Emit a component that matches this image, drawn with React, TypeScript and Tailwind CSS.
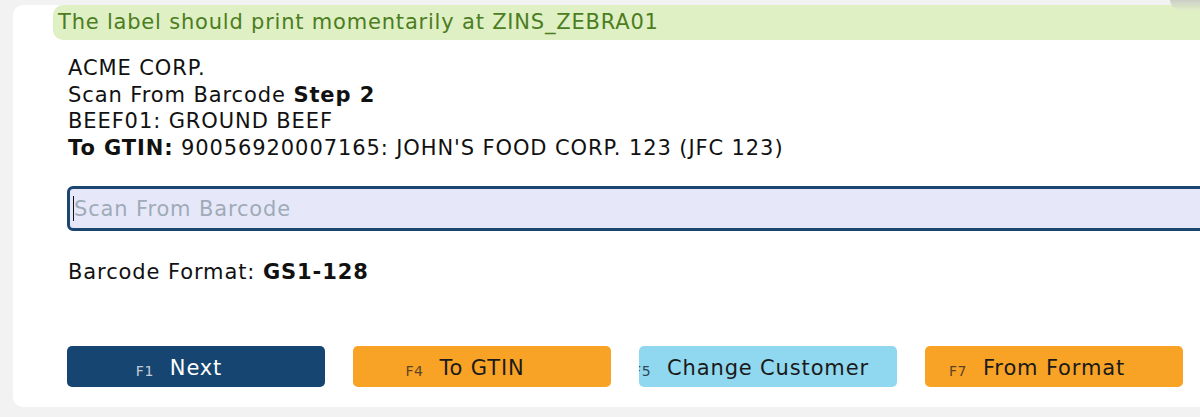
import React from 'react';

interface FKeyButtonProps {
  fkey: string;
  label: string;
  variant: 'navy' | 'orange' | 'sky';
}

function FKeyButton({ fkey, label, variant }: FKeyButtonProps) {
  const bg =
    variant === 'navy'
      ? 'bg-[#154570] text-white'
      : variant === 'orange'
        ? 'bg-[#f9a326] text-[#1a1a1a]'
        : 'bg-[#90d8f0] text-[#1a1a1a]';
  const keyColor =
    variant === 'navy' ? 'text-[#c3ccd6]' : variant === 'orange' ? 'text-[#5b4527]' : 'text-[#2f4a58]';
  return (
    <button className={`w-[258px] h-[41px] rounded-[5px] overflow-hidden flex items-center justify-center ${bg}`}>
      <span className="relative top-[2px] text-[21px] tracking-[0.85px] leading-none">
        <span className={`absolute right-full mr-[16px] bottom-[1px] text-[14px] tracking-[0.5px] leading-none ${keyColor}`}>
          {fkey}
        </span>
        {label}
      </span>
    </button>
  );
}

export default function App() {
  return (
    <div
      className="h-[417px] bg-[#f2f2f2] pl-[13px] pt-[5px] overflow-hidden relative"
      style={{ fontFamily: '"DejaVu Sans", Verdana, sans-serif' }}
    >
      <div className="absolute right-0 top-0 w-[30px] h-[10px] rounded-bl-full bg-gradient-to-b from-[#b8bfae] to-[#e2ecd0] opacity-70" />
      <div className="w-[1210px] h-[402px] bg-white rounded-l-[10px] flex flex-col">
        <div className="ml-[40px] h-[35px] bg-[#dff0c4] rounded-l-[10px] pl-[5px] pt-[1px] flex items-center text-[21px] tracking-[0.8px] text-[#4c7d1f]">
          The label should print momentarily at ZINS_ZEBRA01
        </div>
        <div className="pl-[55px] pt-[15px] text-[21px] tracking-[0.9px] leading-[26.7px] text-[#111]">
          <div>ACME CORP.</div>
          <div>
            Scan From Barcode <b>Step 2</b>
          </div>
          <div>BEEF01: GROUND BEEF</div>
          <div>
            <b>To GTIN:</b> 90056920007165: JOHN'S FOOD CORP. 123 (JFC 123)
          </div>
          <div className="relative mt-[24px] -ml-[1px] w-[1150px] h-[45px]">
            <input
              className="w-full h-full border-[3px] border-[#1a4670] rounded-[6px] bg-[#e6e8fa] px-[4px] pt-[2px] text-[21px] tracking-[0.85px] outline-none placeholder:text-[#9fabb6]"
              placeholder="Scan From Barcode"
            />
            <span className="absolute left-[6px] top-[10px] w-[1px] h-[25px] bg-[#111]" />
          </div>
          <div className="mt-[28px]">
            Barcode Format: <b>GS1-128</b>
          </div>
          <div className="mt-[60px] -ml-[1px] flex gap-[28px]">
            <FKeyButton fkey="F1" label="Next" variant="navy" />
            <FKeyButton fkey="F4" label="To GTIN" variant="orange" />
            <FKeyButton fkey="F5" label="Change Customer" variant="sky" />
            <FKeyButton fkey="F7" label="From Format" variant="orange" />
          </div>
        </div>
      </div>
    </div>
  );
}
